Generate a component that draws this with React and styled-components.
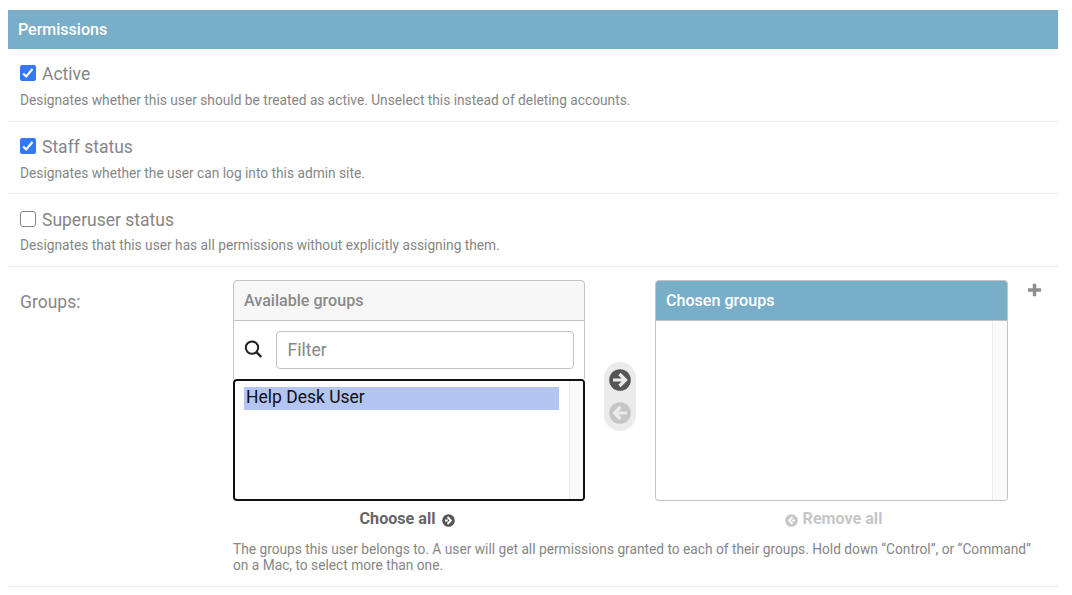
import React from "react";
import styled, { createGlobalStyle } from "styled-components";

const Global = createGlobalStyle`
  * { box-sizing: border-box; }
  body { margin: 0; background: #fff; color: #868686; font-family: Roboto, "Liberation Sans", sans-serif; }
`;

const Fieldset = styled.section`
  width: 1050px;
  margin: 10px 0 0 8px;
`;

const Heading = styled.h2`
  margin: 0;
  height: 39px;
  padding-left: 10px;
  background: #79aec8;
  color: #fff;
  font-size: 16px;
  font-weight: 500;
  line-height: 39px;
`;

const Row = styled.div`
  height: ${(p) => p.$height}px;
  padding: ${(p) => p.$top}px 12px 0;
  border-bottom: 1px solid #ebebeb;
`;

const CheckLabel = styled.label`
  display: flex;
  gap: 6px;
  height: 20px;
  font-size: 17.5px;
  line-height: 20px;
`;

const Box = styled.span`
  display: block;
  width: 16px;
  height: 16px;
  margin-top: 1px;
  border: 1px solid ${(p) => (p.$checked ? "#3478f6" : "#858585")};
  border-radius: ${(p) => (p.$checked ? 2 : 3)}px;
  background: ${(p) => (p.$checked ? "#3478f6" : "#fff")};
  svg { display: block; }
`;

const Help = styled.p`
  margin: ${(p) => p.$top}px 0 0;
  font-size: 13.74px;
  line-height: 16px;
  white-space: nowrap;
`;

const GroupsRow = styled.div`
  display: grid;
  grid-template-columns: 213px 1fr;
  height: 320px;
  padding: 13px 0 0 12px;
  border-bottom: 1px solid #ebebeb;
`;

const GroupsLabel = styled.div`
  padding-top: 12px;
  font-size: 17.5px;
  line-height: 20px;
`;

const Selector = styled.div`
  display: flex;
`;

const Panel = styled.div`
  width: ${(p) => p.$width}px;
`;

const PanelTitle = styled.h3`
  margin: 0;
  height: 41px;
  padding-left: 10px;
  border: 1px solid #c4c4c4;
  border-radius: 4px 4px 0 0;
  background: ${(p) => (p.$chosen ? "#79aec8" : "#f7f7f7")};
  color: ${(p) => (p.$chosen ? "#fff" : "#8a8a8a")};
  font-size: 16.1px;
  font-weight: 500;
  line-height: 39px;
`;

const FilterBar = styled.div`
  display: flex;
  align-items: flex-start;
  gap: 12px;
  height: 58px;
  padding: 10px 10px 0 10px;
  border: solid #c4c4c4;
  border-width: 0 1px;
  > svg { margin-top: 9px; }
`;

const FilterInput = styled.input`
  flex: 1;
  min-width: 0;
  height: 38px;
  padding: 0 10.5px;
  border: 1px solid #c4c4c4;
  border-radius: 4px;
  outline: none;
  font: 17.5px Roboto, "Liberation Sans", sans-serif;
  &::placeholder { color: #868686; opacity: 1; }
`;

const List = styled.div`
  display: flex;
  justify-content: space-between;
  height: ${(p) => (p.$focused ? 122 : 180)}px;
  padding-left: ${(p) => (p.$focused ? 9 : 0)}px;
  border: ${(p) => (p.$focused ? "2px solid #101010" : "1px solid #c4c4c4")};
  border-top-width: ${(p) => (p.$focused ? 2 : 0)}px;
  border-radius: ${(p) => (p.$focused ? "4px" : "0 0 4px 4px")};
  overflow: hidden;
`;

const Option = styled.div`
  width: 315px;
  height: 23px;
  margin-top: 6px;
  padding-left: 2px;
  background: #b3c5f3;
  color: #101010;
  font-size: 17.5px;
  line-height: 21px;
`;

const Track = styled.div`
  width: ${(p) => p.$width}px;
  margin-left: auto;
  border-left: 1px solid #ebebeb;
  background: #fafafa;
`;

const Chooser = styled.div`
  display: flex;
  flex-direction: column;
  align-items: center;
  gap: 11px;
  width: 32px;
  height: 69px;
  margin: 82px 19px 0;
  padding-top: 7px;
  border-radius: 16px;
  background: #ebebeb;
  svg { display: block; }
`;

const BulkAction = styled.div`
  display: flex;
  align-items: center;
  justify-content: center;
  gap: ${(p) => (p.$muted ? 5 : 7)}px;
  height: 20px;
  margin-top: 7px;
  padding-right: ${(p) => (p.$muted ? 0 : 3)}px;
  padding-left: ${(p) => (p.$muted ? 4 : 0)}px;
  color: ${(p) => (p.$muted ? "#c6c6c6" : "#666")};
  font-size: 16.1px;
  font-weight: 700;
  svg { position: relative; top: 2px; }
`;

const AddButton = styled.span`
  margin: 3px 0 0 20px;
  svg { display: block; }
`;

const GroupHelp = styled.p`
  margin: 13px 0 0;
  font-size: 13.74px;
  line-height: 16px;
  white-space: nowrap;
`;

function Arrow({ size, color, left, hole = "#ebebeb" }) {
  return (
    <svg width={size} height={size} viewBox="0 0 22 22">
      <g transform={left ? "translate(22 0) scale(-1 1)" : undefined}>
        <circle cx="11" cy="11" r="10.8" fill={color} />
        <path d="M4 11h12M10.5 5l6 6-6 6" fill="none" stroke={hole} strokeWidth="3.2" />
      </g>
    </svg>
  );
}

function SmallArrow({ color, left }) {
  return (
    <svg width="13" height="13" viewBox="0 0 13 13">
      <g transform={left ? "translate(13 0) scale(-1 1)" : undefined}>
        <circle cx="6.5" cy="6.5" r="6.3" fill={color} />
        <path d="M5.5 3l3.4 3.5L5.5 10M3 6.5h2.8" fill="none" stroke="#fff" strokeWidth="1.8" />
      </g>
    </svg>
  );
}

function CheckField({ label, help, checked, height, top = 15, helpTop = 8 }) {
  return (
    <Row $height={height} $top={top}>
      <CheckLabel>
        <Box $checked={checked}>
          {checked && (
            <svg width="14" height="14" viewBox="0 0 14 14">
              <path d="M2.2 7.5l3 3L11.5 3" fill="none" stroke="#fff" strokeWidth="2.1" />
            </svg>
          )}
        </Box>
        {label}
      </CheckLabel>
      <Help $top={helpTop}>{help}</Help>
    </Row>
  );
}

export default function App() {
  return (
    <>
      <Global />
      <Fieldset>
        <Heading>Permissions</Heading>
        <CheckField
          label="Active"
          checked
          height={73}
          help="Designates whether this user should be treated as active. Unselect this instead of deleting accounts."
        />
        <CheckField
          label="Staff status"
          checked
          height={72}
          help="Designates whether the user can log into this admin site."
        />
        <CheckField
          label="Superuser status"
          height={73}
          top={16}
          helpTop={7}
          help="Designates that this user has all permissions without explicitly assigning them."
        />
        <GroupsRow>
          <GroupsLabel>Groups:</GroupsLabel>
          <div>
            <Selector>
              <Panel $width={352}>
                <PanelTitle>Available groups</PanelTitle>
                <FilterBar>
                  <svg width="20" height="20" viewBox="0 0 20 20">
                    <circle cx="8" cy="7.6" r="6.2" fill="none" stroke="#202020" strokeWidth="2" />
                    <path d="M12.2 11.9l5.1 5.1" stroke="#202020" strokeWidth="2.4" />
                  </svg>
                  <FilterInput placeholder="Filter" />
                </FilterBar>
                <List $focused>
                  <Option>Help Desk User</Option>
                  <Track $width={14} />
                </List>
                <BulkAction>
                  Choose all
                  <SmallArrow color="#555" />
                </BulkAction>
              </Panel>
              <Chooser>
                <Arrow size={22} color="#555" />
                <Arrow size={22} color="#c6c6c6" left />
              </Chooser>
              <Panel $width={353}>
                <PanelTitle $chosen>Chosen groups</PanelTitle>
                <List>
                  <Track $width={15} />
                </List>
                <BulkAction $muted>
                  <SmallArrow color="#c6c6c6" left />
                  Remove all
                </BulkAction>
              </Panel>
              <AddButton>
                <svg width="14" height="14" viewBox="0 0 14 14">
                  <path d="M6.5 .7v12.6M0 7h13" stroke="#8e8e8e" strokeWidth="3.4" />
                </svg>
              </AddButton>
            </Selector>
            <GroupHelp>
              The groups this user belongs to. A user will get all permissions granted to each of their groups. Hold down “Control”, or “Command”
              <br />
              on a Mac, to select more than one.
            </GroupHelp>
          </div>
        </GroupsRow>
      </Fieldset>
    </>
  );
}
